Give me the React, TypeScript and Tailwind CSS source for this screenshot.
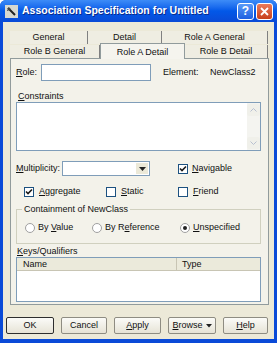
import React from "react";

function Check({ on }: { on?: boolean }) {
  return (
    <span className="flex h-[10px] w-[10px] items-center justify-center border border-[#1c5180] bg-white">
      {on ? (
        <svg width="8" height="8" viewBox="0 0 8 8">
          <path d="M1 3.5 L3 5.5 L7 1.5" stroke="#21a121" strokeWidth="1.6" fill="none" className="stroke-[#1a1a1a]" />
        </svg>
      ) : null}
    </span>
  );
}

function Radio({ on }: { on?: boolean }) {
  return (
    <span className="flex h-[10px] w-[10px] items-center justify-center rounded-full border border-[#a0a0a0] bg-white">
      {on ? <span className="h-[4px] w-[4px] rounded-full bg-[#222]" /> : null}
    </span>
  );
}

function U({ c }: { c: string }) {
  return <span className="underline">{c}</span>;
}

function Btn({ children, main }: { children: React.ReactNode; main?: boolean }) {
  return (
    <div
      className={
        "flex h-[17px] items-center justify-center rounded-[2px] border bg-gradient-to-b from-[#fbfbf8] to-[#e6e3d6] " +
        (main ? "border-[#2e2e2e] border-[1.5px]" : "border-[#8e8c82]")
      }
    >
      {children}
    </div>
  );
}

export default function App() {
  return (
    <div className="flex h-[343px] w-[277px] flex-col overflow-hidden rounded-t-[6px] bg-[#0a4ad8] font-['Liberation_Sans',Arial,sans-serif] text-[9px] text-[#111]">
      {/* title bar */}
      <div className="flex h-[22px] items-center bg-gradient-to-b from-[#3d8cf7] via-[#0258e8] to-[#0a4ad6] pl-[5px] pr-[4px]">
        <svg width="13" height="13" viewBox="0 0 13 13" className="mr-[4px]">
          <rect x="0" y="0" width="13" height="13" fill="#d8d8d0" />
          <path d="M3 3 L10 10" stroke="#222" strokeWidth="2" />
          <path d="M2 6 L5 3" stroke="#666" strokeWidth="1" />
          <circle cx="4" cy="4" r="1.5" fill="#444" />
        </svg>
        <span className="flex-1 text-[10.5px] font-bold text-white [text-shadow:1px_1px_0_#0a2a8a]">
          Association Specification for Untitled
        </span>
        <div className="mr-[2px] flex h-[17px] w-[17px] items-center justify-center rounded-[3px] border border-white bg-gradient-to-b from-[#5a9af8] to-[#1e5fe0] text-[12px] font-bold text-white">
          ?
        </div>
        <div className="flex h-[17px] w-[17px] items-center justify-center rounded-[3px] border border-white bg-gradient-to-b from-[#ea7a5a] to-[#c8401a]">
          <svg width="9" height="9" viewBox="0 0 9 9">
            <path d="M1 1 L8 8 M8 1 L1 8" stroke="white" strokeWidth="1.8" />
          </svg>
        </div>
      </div>

      {/* body */}
      <div className="mx-[3px] mb-[4px] flex flex-1 flex-col bg-[#ece9d8] pt-[9px]">
        {/* tabs */}
        <div className="ml-[7px] mr-[6px] flex h-[13px]">
          <div className="flex w-[78px] items-center justify-center border-r border-[#808080] bg-[#efede2]">General</div>
          <div className="flex w-[74px] items-center justify-center border-r border-[#808080] bg-[#efede2]">Detail</div>
          <div className="flex flex-1 items-center justify-center border-r border-[#808080] bg-[#efede2]">Role A General</div>
        </div>
        <div className="ml-[7px] mr-[6px] flex h-[14px] items-end">
          <div className="flex h-[13px] w-[90px] items-center justify-center border-r border-[#808080] bg-[#efede2]">Role B General</div>
          <div className="z-10 -mb-px flex h-[16px] w-[85px] items-start justify-center border-x border-t border-[#919b9c] bg-[#f5f4ee] pt-[2px]">Role A Detail</div>
          <div className="flex h-[13px] flex-1 items-center justify-center border-r border-[#808080] bg-[#efede2]">Role B Detail</div>
        </div>

        {/* panel */}
        <div className="ml-[7px] mr-[5px] flex h-[247px] flex-col border border-[#919b9c] bg-[#f3f2ea] pl-[5px] pr-[7px] pt-[5px]">
          {/* role row */}
          <div className="flex h-[17px] items-center">
            <span className="w-[25px]"><U c="R" />ole:</span>
            <div className="h-[17px] w-[110px] border border-[#7f9db9] bg-white" />
            <span className="ml-[12px] w-[47px]">Element:</span>
            <span>NewClass2</span>
          </div>
          <div className="mt-[9px] h-[12px] pl-[2px]"><U c="C" />onstraints</div>
          <div className="flex h-[49px] border border-[#7f9db9] bg-white">
            <div className="flex-1" />
            <div className="flex w-[13px] flex-col justify-between bg-[#f4f4f0] py-[1px]">
              <div className="flex h-[12px] items-center justify-center rounded-[2px] bg-[#f0f0ea]">
                <svg width="7" height="4" viewBox="0 0 7 4"><path d="M0.5 3.5 L3.5 0.5 L6.5 3.5" stroke="#b8c0d0" fill="none" /></svg>
              </div>
              <div className="flex h-[12px] items-center justify-center rounded-[2px] bg-[#f0f0ea]">
                <svg width="7" height="4" viewBox="0 0 7 4"><path d="M0.5 0.5 L3.5 3.5 L6.5 0.5" stroke="#b8c0d0" fill="none" /></svg>
              </div>
            </div>
          </div>

          {/* multiplicity row */}
          <div className="mt-[10px] flex h-[15px] items-center">
            <span className="w-[46px]"><U c="M" />ultiplicity:</span>
            <div className="flex h-[15px] w-[88px] items-center justify-end border border-[#7f9db9] bg-white pr-[1px]">
              <div className="flex h-[11px] w-[12px] items-center justify-center bg-[#ece9d8]">
                <svg width="7" height="4" viewBox="0 0 7 4"><path d="M0 0 L7 0 L3.5 4 Z" fill="#222" /></svg>
              </div>
            </div>
            <div className="ml-[28px] flex items-center gap-[4px]">
              <Check on />
              <span><U c="N" />avigable</span>
            </div>
          </div>

          {/* checkbox row */}
          <div className="mt-[9px] flex h-[13px] items-center pl-[8px]">
            <div className="flex w-[82px] items-center gap-[5px]">
              <Check on />
              <span><U c="A" />ggregate</span>
            </div>
            <div className="flex w-[72px] items-center gap-[5px]">
              <Check />
              <span><U c="S" />tatic</span>
            </div>
            <div className="flex items-center gap-[5px]">
              <Check />
              <span><U c="F" />riend</span>
            </div>
          </div>

          {/* group box */}
          <div className="relative mt-[11px] flex h-[35px] items-center border border-[#d0d0bf] pl-[8px]">
            <span className="absolute left-[5px] top-[-7px] bg-[#f3f2ea] px-[2px]">Containment of NewClass</span>
            <div className="mt-[3px] flex items-center">
              <div className="flex w-[67px] items-center gap-[3px]">
                <Radio />
                <span>By <U c="V" />alue</span>
              </div>
              <div className="flex w-[88px] items-center gap-[3px]">
                <Radio />
                <span>By R<U c="e" />ference</span>
              </div>
              <div className="flex items-center gap-[3px]">
                <Radio on />
                <span><U c="U" />nspecified</span>
              </div>
            </div>
          </div>

          <div className="mt-[1px] h-[12px] pl-[1px]"><U c="K" />eys/Qualifiers</div>
          <div className="flex h-[45px] flex-col border border-[#7f9db9] bg-white">
            <div className="flex h-[13px] border-b border-[#c8c5b4] bg-[#ebeadb]">
              <div className="w-[160px] border-r border-[#c8c5b4] pl-[6px] leading-[12px]">Name</div>
              <div className="flex-1 pl-[5px] leading-[12px]">Type</div>
            </div>
          </div>
        </div>

        {/* buttons */}
        <div className="mt-[12px] grid grid-cols-[48px_46px_47px_48px_45px] gap-x-[7px] px-[3px]">
          <Btn main>OK</Btn>
          <Btn>Cancel</Btn>
          <Btn><U c="A" />pply</Btn>
          <Btn>
            <U c="B" />rowse
            <svg width="6" height="4" viewBox="0 0 6 4" className="ml-[3px]"><path d="M0 0 L6 0 L3 3.5 Z" fill="#222" /></svg>
          </Btn>
          <Btn><U c="H" />elp</Btn>
        </div>
      </div>
    </div>
  );
}
